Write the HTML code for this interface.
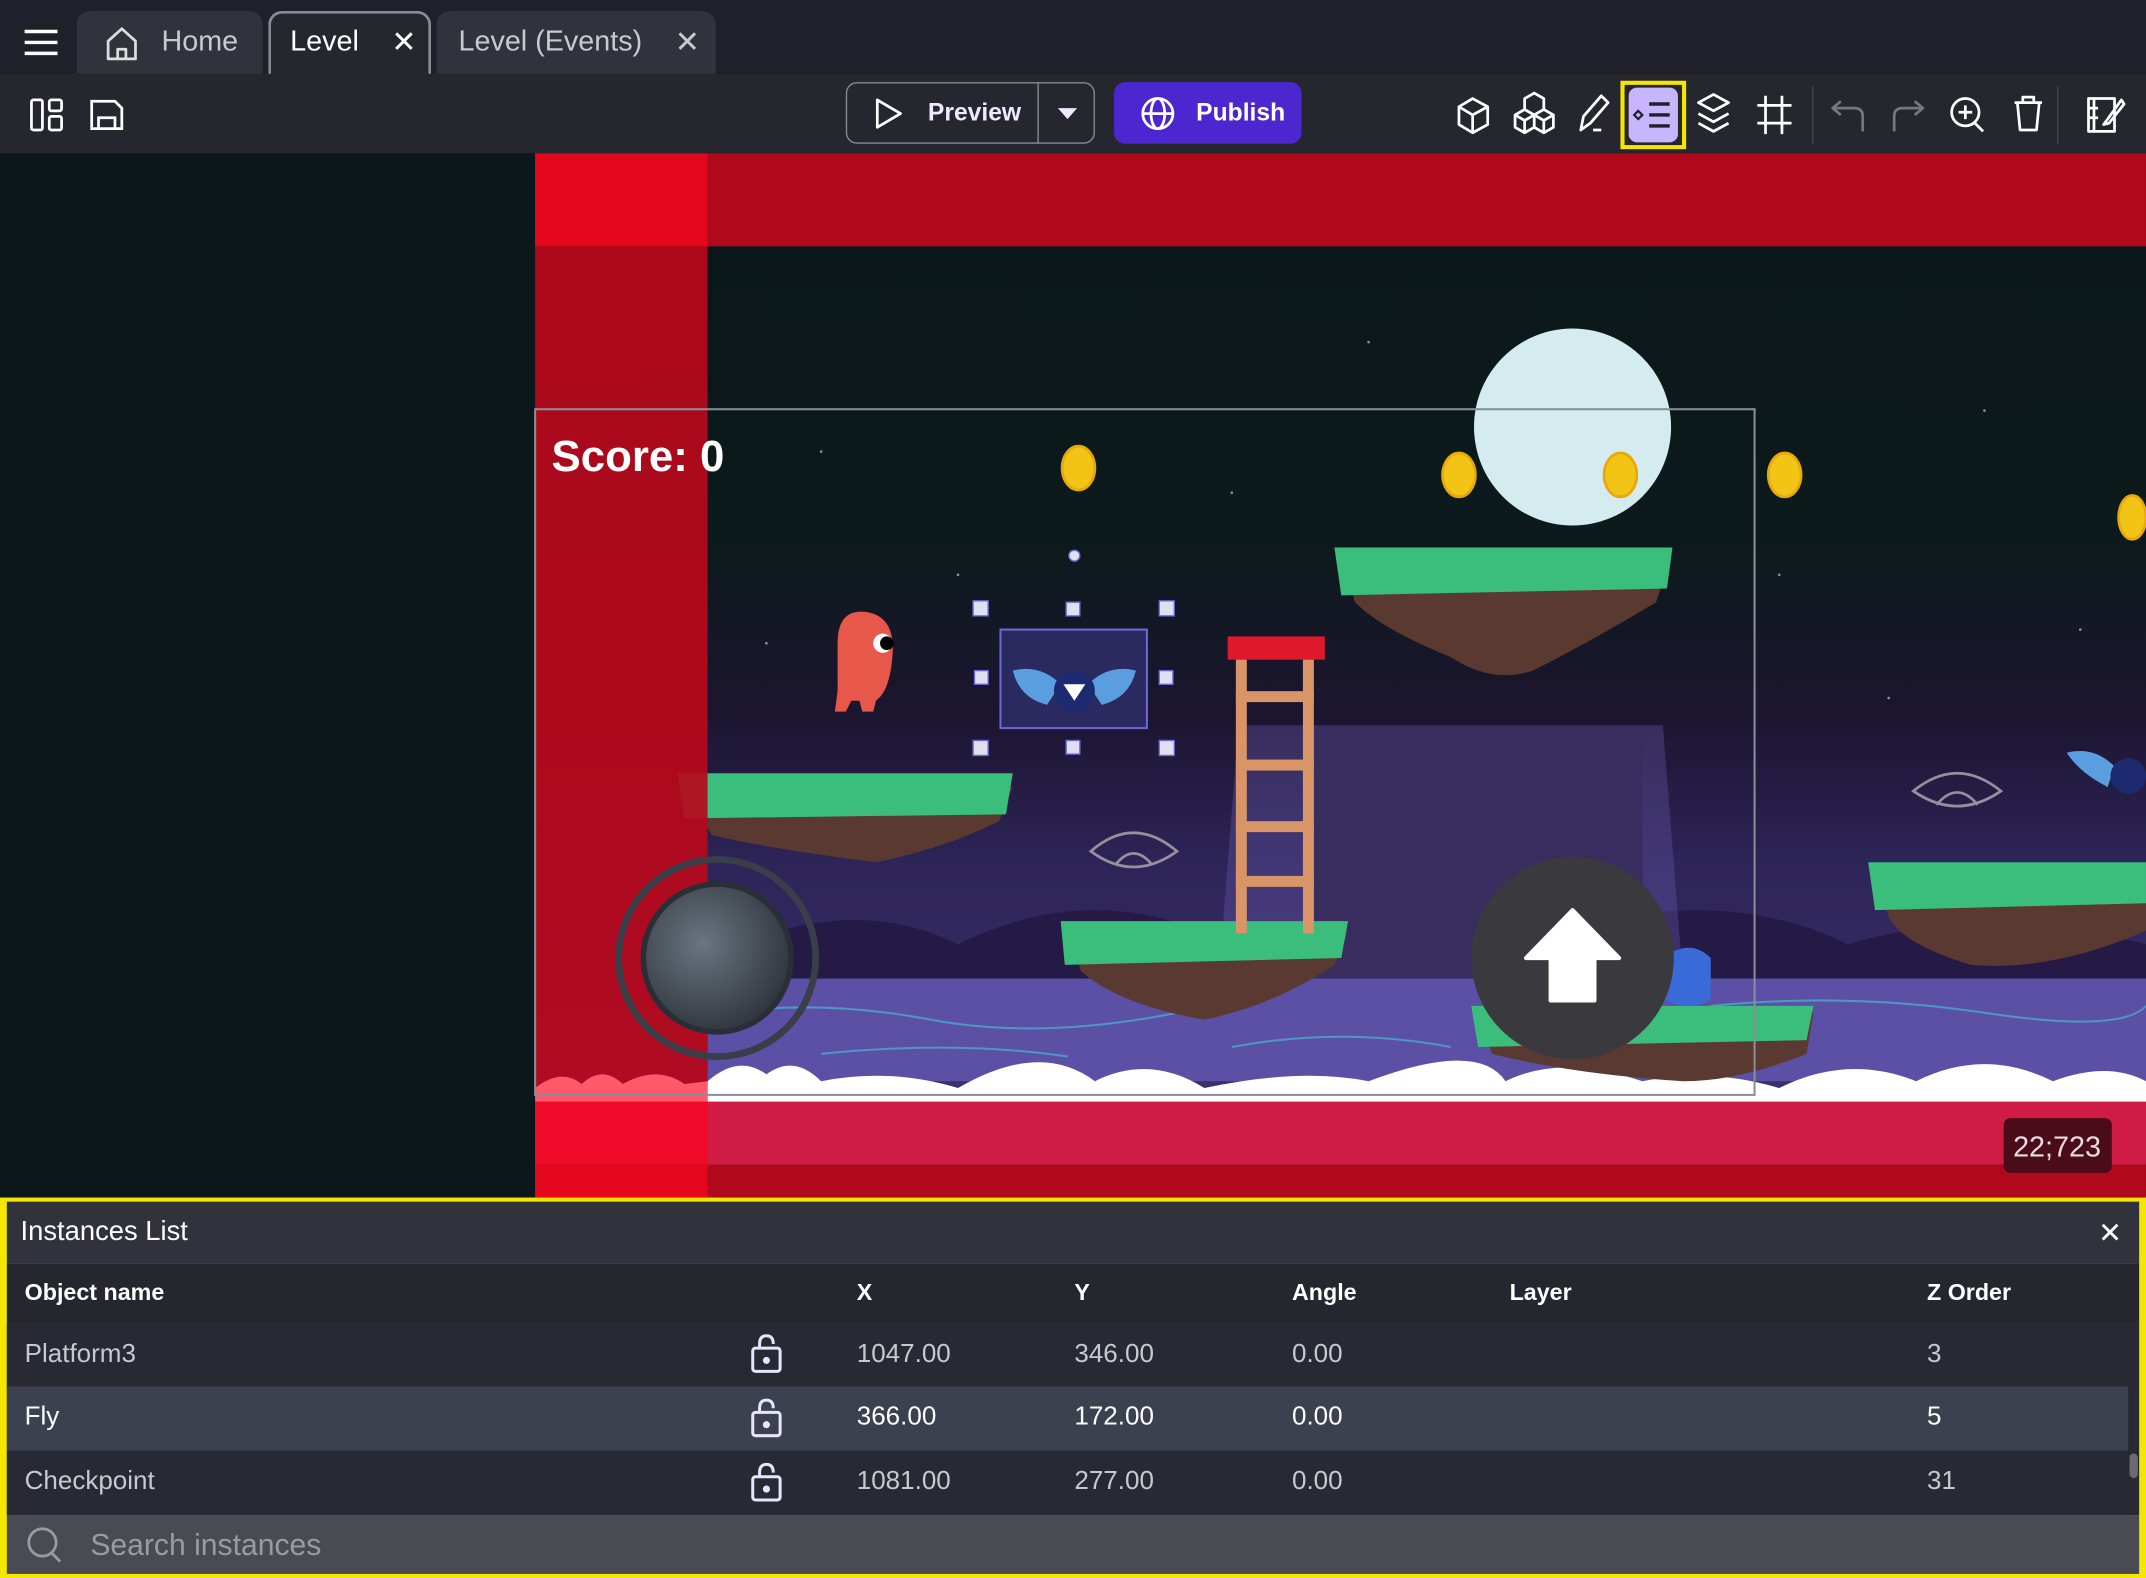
<!DOCTYPE html>
<html><head><meta charset="utf-8"><style>
html,body{margin:0;padding:0;background:#1f2029;overflow:hidden;width:2146px;height:1578px}
#w{position:absolute;left:0;top:0;width:1568px;height:1153px;transform:scale(1.368622);transform-origin:0 0;font-family:"Liberation Sans",sans-serif;color:#fff}
.a{position:absolute}
.tab{position:absolute;top:8px;height:46px;background:#31323b;border-radius:10px 10px 0 0;box-sizing:border-box;font-size:21px;line-height:46px;color:#c9c9d0}
.row{position:absolute;left:5px;width:1550px;height:47px;font-size:19px;line-height:46px;color:#c8c9d0}
.row span,.hd span{position:absolute;top:0}
.hd{position:absolute;left:5px;width:1558px;height:44px;top:923px;background:#25262e;font-size:17px;font-weight:bold;line-height:44px}
</style></head><body><div id="w">
<div class="a" style="left:0;top:0;width:1568px;height:54px;background:#1f2029"></div>
<svg class="a" style="left:16px;top:20px" width="28" height="22" viewBox="0 0 28 22"><path d="M2 3H26M2 11H26M2 19H26" stroke="#fff" stroke-width="2.5" fill="none"/></svg>
<div class="tab" style="left:56px;width:136px;padding-left:62px">Home</div>
<svg class="a" style="left:76px;top:19px" width="26" height="26" viewBox="0 0 26 26"><path d="M3 24V11L13 2L23 11V24Z M10 24V17H16V24" stroke="#ddd" stroke-width="2" fill="none" stroke-linejoin="round"/></svg>
<div class="tab" style="left:196px;width:119px;background:#25262e;border:2px solid #8a8a93;border-bottom:none;color:#fff;padding-left:14px;line-height:42px">Level<span style="position:absolute;left:88px;font-size:22px">✕</span></div>
<div class="tab" style="left:319px;width:204px;padding-left:16px">Level (Events)<span style="position:absolute;left:174px;font-size:22px">✕</span></div>
<div class="a" style="left:0;top:54px;width:1568px;height:58px;background:#25262e"></div>
<svg class="a" style="left:20px;top:70px" width="28" height="28" viewBox="0 0 28 28" fill="none" stroke="#fff" stroke-width="2"><rect x="3" y="3" width="8" height="22" rx="1.5"/><rect x="16" y="3" width="9" height="8" rx="1.5"/><rect x="16" y="15" width="9" height="10" rx="1.5"/></svg>
<svg class="a" style="left:64px;top:70px" width="28" height="28" viewBox="0 0 28 28" fill="none" stroke="#fff" stroke-width="2"><path d="M3 4H20L25 9V24H3Z"/><path d="M8 24V16H20V24"/></svg>
<div class="a" style="left:618px;top:60px;width:182px;height:45px;border:1.5px solid #8a8a93;border-radius:8px;box-sizing:border-box"></div>
<div class="a" style="left:758px;top:60px;width:1px;height:45px;background:#8a8a93"></div>
<svg class="a" style="left:636px;top:70px" width="26" height="26" viewBox="0 0 26 26"><path d="M5 3L22 13L5 23Z" stroke="#fff" stroke-width="2" fill="none" stroke-linejoin="round"/></svg>
<div class="a" style="left:678px;top:72px;font-size:18px;font-weight:bold;color:#eee9ff">Preview</div>
<svg class="a" style="left:772px;top:78px" width="16" height="10"><path d="M1 1H15L8 9Z" fill="#eee9ff"/></svg>
<div class="a" style="left:814px;top:60px;width:137px;height:45px;background:#4c27cf;border-radius:8px"></div>
<svg class="a" style="left:833px;top:70px" width="26" height="26" viewBox="0 0 26 26" fill="none" stroke="#fff" stroke-width="2"><circle cx="13" cy="13" r="11"/><ellipse cx="13" cy="13" rx="5" ry="11"/><path d="M2 13H24"/></svg>
<div class="a" style="left:874px;top:72px;font-size:18px;font-weight:bold">Publish</div>
<svg class="a" style="left:1060px;top:64px" width="510" height="40" viewBox="1060 64 510 40" fill="none" stroke="#fff" stroke-width="2" stroke-linejoin="round">
<path d="M1076 72L1087 78V91L1076 97L1066 91V78Z M1066 78L1076 84L1087 78 M1076 84V97"/>
<path d="M1121 68L1128 72V80L1121 84L1114 80V72Z M1114 80L1107 84V93L1114 97L1121 93 M1121 84V93L1128 97L1135 93V84L1128 80 M1107 84L1114 88L1121 84 M1121 84L1128 88L1135 84 M1114 88V97 M1128 88V97"/>
<path d="M1155 95L1157 85L1170 70L1175 75L1162 90Z M1164 95H1170"/>
<path d="M1241 75L1252 69L1263 75L1252 81Z M1241 83L1252 89L1263 83 M1241 90L1252 96L1263 90"/>
<path d="M1290 70V98M1302 70V98M1284 77H1309M1284 90H1309"/>
<path d="M1345 74L1339 79L1345 84 M1339 79H1355Q1361 79 1361 85V96" stroke="#777"/>
<path d="M1399 74L1405 79L1399 84 M1405 79H1390Q1384 79 1384 85V96" stroke="#777"/>
<circle cx="1436" cy="82" r="10"/><path d="M1443 90L1449 96M1431 82H1441M1436 77V87"/>
<path d="M1472 75H1492M1478 75V71H1486V75M1474 75L1476 95H1488L1490 75"/>
<path d="M1526 72H1545V96H1526Z M1530 72V96 M1526 79H1533M1526 86H1533 M1550 73L1540 87L1537 91L1541 90L1552 76Z"/>
</svg>
<div class="a" style="left:1324px;top:63px;width:1px;height:42px;background:#44454e"></div>
<div class="a" style="left:1503px;top:63px;width:1px;height:42px;background:#44454e"></div>
<div class="a" style="left:1184px;top:59px;width:48px;height:50px;border:3px solid #f5e600;box-sizing:border-box"></div>
<div class="a" style="left:1190px;top:64px;width:36px;height:40px;background:#c7b6ff;border-radius:6px"></div>
<svg class="a" style="left:1190px;top:64px" width="36" height="40" viewBox="0 0 36 40" stroke="#1f2029" stroke-width="2.5" fill="none"><path d="M7 17L10 20L7 23L4 20Z" stroke-width="1.6"/><path d="M15 12H30M15 20H30M15 28H30"/></svg>
<svg class="a" style="left:0;top:112px" width="1568" height="763" viewBox="0 112 1568 763">
<defs>
<linearGradient id="sky" x1="0" y1="0" x2="0" y2="1"><stop offset="0" stop-color="#0b1719"/><stop offset="0.35" stop-color="#0d1a1c"/><stop offset="0.55" stop-color="#1c1530"/><stop offset="0.72" stop-color="#2d2458"/><stop offset="1" stop-color="#3b3170"/></linearGradient>
<radialGradient id="joy" cx="0.4" cy="0.4" r="0.7"><stop offset="0" stop-color="#6a7580"/><stop offset="1" stop-color="#2a2e36"/></radialGradient>
</defs>
<rect x="0" y="112" width="391" height="763" fill="#0b1719"/>
<rect x="391" y="180" width="1177" height="625" fill="url(#sky)"/>
<g fill="#fff" opacity="0.5"><circle cx="600" cy="330" r="1"/><circle cx="700" cy="420" r="1"/><circle cx="900" cy="360" r="1"/><circle cx="1300" cy="420" r="1"/><circle cx="1450" cy="300" r="1"/><circle cx="1000" cy="250" r="1"/><circle cx="560" cy="470" r="1"/><circle cx="1380" cy="510" r="1"/><circle cx="1520" cy="460" r="1"/></g>
<path d="M517 700Q620 650 700 690Q800 640 900 690Q1000 650 1100 690Q1250 640 1350 690Q1450 660 1568 690V760H517Z" fill="#251a45"/>
<rect x="960" y="525" width="240" height="200" rx="20" fill="#1e1433"/>
<path d="M890 720L905 530L1215 530L1230 720Z" fill="#6b5cb0" opacity="0.35"/>
<rect x="517" y="715" width="1051" height="75" fill="#5c50a6"/>
<g stroke="#48b5d0" stroke-width="1.5" fill="none" opacity="0.7"><path d="M530 740Q600 730 680 745T860 740"/><path d="M900 765Q980 750 1060 765"/><path d="M1250 735Q1350 725 1450 740T1568 735"/><path d="M600 770Q700 760 780 772"/></g>
<path d="M517 805V790Q540 770 560 785Q580 770 600 790Q650 780 700 795Q760 760 800 790Q840 770 880 795Q950 780 1000 790Q1080 760 1100 790Q1140 770 1200 790Q1250 780 1300 795Q1350 770 1400 790Q1450 765 1500 790Q1540 775 1568 790V805Z" fill="#fff"/>
<circle cx="1149" cy="312" r="72" fill="#d4ecf0"/>
<g fill="#f2c416" stroke="#e8a80c" stroke-width="2"><ellipse cx="788" cy="342" rx="12" ry="16"/><ellipse cx="1066" cy="347" rx="12" ry="16"/><ellipse cx="1184" cy="347" rx="12" ry="16"/><ellipse cx="1304" cy="347" rx="12" ry="16"/><ellipse cx="1558" cy="378" rx="10" ry="16"/></g>
<g>
<path d="M982 410H1220L1210 440Q1160 470 1120 490Q1090 500 1060 480Q1010 460 990 440Z" fill="#5a3a30"/>
<path d="M975 400H1222L1218 430L980 435Z" fill="#3bbd7c"/>
<path d="M500 575H740L730 600Q690 620 640 630Q560 620 520 610Z" fill="#5a3a30"/>
<path d="M495 565H740L735 595L500 598Z" fill="#3bbd7c"/>
<path d="M780 680H985L975 705Q930 735 880 745Q820 735 790 710Z" fill="#5a3a30"/>
<path d="M775 673H985L980 700L778 705Z" fill="#3bbd7c"/>
<path d="M1370 640H1568V680Q1500 710 1440 705Q1390 690 1380 670Z" fill="#5a3a30"/>
<path d="M1365 630H1568V660L1370 665Z" fill="#3bbd7c"/>
<path d="M1080 740H1325L1320 770Q1270 790 1230 790Q1150 785 1090 770Z" fill="#5a3a30"/>
<path d="M1075 735H1325L1320 760L1080 765Z" fill="#3bbd7c"/>
</g>
<rect x="897" y="465" width="71" height="17" fill="#e0182c"/>
<g fill="#d99567"><rect x="903" y="482" width="8" height="200"/><rect x="952" y="482" width="8" height="200"/><rect x="903" y="505" width="57" height="8"/><rect x="903" y="555" width="57" height="8"/><rect x="903" y="600" width="57" height="8"/><rect x="903" y="640" width="57" height="8"/></g>
<path d="M612 470Q612 445 632 447Q655 450 652 480Q650 505 640 512L638 520H630L628 512H622L618 520H610L612 505Z" fill="#e8584a"/>
<circle cx="645" cy="470" r="7" fill="#fff"/><circle cx="648" cy="470" r="5" fill="#000"/>
<rect x="731" y="460" width="107" height="72" fill="#2a2a60" stroke="#6a68d8" stroke-width="1.5"/>
<path d="M740 490Q760 485 775 500L765 515Q745 510 740 490Z M830 490Q810 485 795 500L805 515Q825 510 830 490Z" fill="#5a9ee0"/>
<circle cx="785" cy="505" r="15" fill="#1e2a70"/><path d="M777 500L785 512L793 500" fill="#fff"/>
<g fill="#e0e0f0" stroke="#6a68d8"><rect x="711" y="439" width="11" height="11"/><rect x="779" y="440" width="10" height="10"/><rect x="847" y="439" width="11" height="11"/><rect x="712" y="490" width="10" height="10"/><rect x="847" y="490" width="10" height="10"/><rect x="711" y="541" width="11" height="11"/><rect x="779" y="541" width="10" height="10"/><rect x="847" y="541" width="11" height="11"/><circle cx="785" cy="406" r="4"/></g>
<path d="M1510 550Q1530 545 1545 560L1540 575Q1520 565 1510 550Z" fill="#5a9ee0"/><circle cx="1555" cy="567" r="13" fill="#1e2a70"/>
<g stroke="#9a8e9e" stroke-width="2" fill="none"><path d="M797 622Q828 595 860 622Q828 645 797 622Z M815 632Q828 615 842 632"/><path d="M1398 578Q1430 552 1462 578Q1430 600 1398 578Z M1415 588Q1430 570 1445 588"/></g>
<path d="M1215 700Q1235 685 1250 700V730Q1235 740 1215 730Z" fill="#3a6ad8"/>
<rect x="391" y="112" width="1177" height="68" fill="#b0091b"/>
<rect x="391" y="112" width="126" height="68" fill="#e5071b"/>
<rect x="391" y="180" width="126" height="625" fill="#b8091c" opacity="0.93"/>
<path d="M391 805V795Q410 780 425 792Q440 778 455 792Q480 778 500 792L517 790V805Z" fill="#ff5a6a"/>
<rect x="391" y="805" width="1177" height="46" fill="#d01c44"/>
<rect x="391" y="805" width="126" height="46" fill="#ee0a28"/>
<rect x="391" y="851" width="1177" height="24" fill="#b0091b"/>
<rect x="391" y="851" width="126" height="24" fill="#e5071b"/>
<circle cx="524" cy="700" r="72" fill="none" stroke="#3a3e48" stroke-width="5"/>
<circle cx="524" cy="700" r="54" fill="url(#joy)" stroke="#2a2e36" stroke-width="4"/>
<circle cx="1149" cy="700" r="74" fill="#3a3a3e"/>
<path d="M1149 665L1183 700H1165V731H1133V700H1115Z" fill="#fff" stroke="#fff" stroke-width="3" stroke-linejoin="round"/>
<rect x="391" y="299" width="891" height="501" fill="none" stroke="#8a8e96" stroke-width="1.5"/>
<text x="403" y="344" font-family="Liberation Sans, sans-serif" font-weight="bold" font-size="32" fill="#fff">Score: 0</text>
<rect x="1464" y="817" width="79" height="40" rx="5" fill="#4a0c1a"/>
<text x="1503" y="845" text-anchor="middle" font-family="Liberation Sans, sans-serif" font-size="21" fill="#e8dede">22;723</text>
</svg>
<div class="a" style="left:0;top:875px;width:1568px;height:278px;background:#f5e600"></div>
<div class="a" style="left:5px;top:878px;width:1558px;height:45px;background:#31323b"></div>
<div class="a" style="left:15px;top:889px;font-size:20px">Instances List</div>
<div class="a" style="left:1533px;top:889px;font-size:21px">✕</div>
<div class="hd"><span style="left:13px">Object name</span><span style="left:621px">X</span><span style="left:780px">Y</span><span style="left:939px">Angle</span><span style="left:1098px">Layer</span><span style="left:1403px">Z Order</span></div>
<div class="a" style="left:5px;top:967px;width:1558px;height:140px;background:#272a33"></div>
<div class="row" style="top:967px;background:#272a33"><span style="left:13px">Platform3</span><span style="left:621px">1047.00</span><span style="left:780px">346.00</span><span style="left:939px">0.00</span><span style="left:1403px">3</span></div>
<div class="row" style="top:1013px;background:#3c4150;color:#fff"><span style="left:13px">Fly</span><span style="left:621px">366.00</span><span style="left:780px">172.00</span><span style="left:939px">0.00</span><span style="left:1403px">5</span></div>
<div class="row" style="top:1060px;background:#272a33"><span style="left:13px">Checkpoint</span><span style="left:621px">1081.00</span><span style="left:780px">277.00</span><span style="left:939px">0.00</span><span style="left:1403px">31</span></div>
<div class="a" style="left:1556px;top:1062px;width:6px;height:18px;background:#6a6b72;border-radius:3px"></div>
<svg class="a" style="left:547px;top:972px" width="26" height="130" viewBox="0 0 26 130" fill="none" stroke="#e8e4ff" stroke-width="2.2">
<path d="M8 13V10Q8 4 13 4Q18 4 18 10"/><rect x="3" y="13" width="20" height="17" rx="2"/><circle cx="13" cy="22" r="1.5" fill="#e8e4ff"/>
<g transform="translate(0,47)"><path d="M8 13V10Q8 4 13 4Q18 4 18 10"/><rect x="3" y="13" width="20" height="17" rx="2"/><circle cx="13" cy="22" r="1.5" fill="#e8e4ff"/></g>
<g transform="translate(0,94)"><path d="M8 13V10Q8 4 13 4Q18 4 18 10"/><rect x="3" y="13" width="20" height="17" rx="2"/><circle cx="13" cy="22" r="1.5" fill="#e8e4ff"/></g>
</svg>
<div class="a" style="left:5px;top:1107px;width:1558px;height:43px;background:#4a4a52"></div>
<svg class="a" style="left:18px;top:1114px" width="30" height="30" viewBox="0 0 30 30" fill="none" stroke="#9a9aa2" stroke-width="2"><circle cx="13" cy="13" r="10"/><path d="M20 21L26 27"/></svg>
<div class="a" style="left:66px;top:1116px;font-size:22px;color:#9a9aa2">Search instances</div>
</div></body></html>
